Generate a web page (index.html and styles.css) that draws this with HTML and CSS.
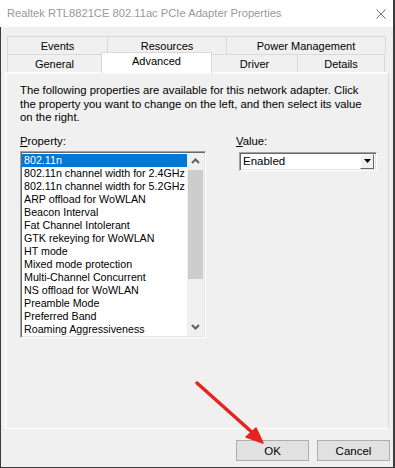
FILE: index.html
```html
<!DOCTYPE html>
<html>
<head>
<meta charset="utf-8">
<link rel="stylesheet" href="styles.css">
</head>
<body>
<div class="window">
  <div class="titlebar">
    <span class="title">Realtek RTL8821CE 802.11ac PCIe Adapter Properties</span>
    <svg class="close" width="10" height="10" viewBox="0 0 10 10"><path d="M0.5 0.5L9.5 9.5M9.5 0.5L0.5 9.5" stroke="#707070" stroke-width="1" fill="none"/></svg>
  </div>
  <div class="body">
    <div class="tabs">
      <div class="tabrow">
        <div class="tab w-events">Events</div>
        <div class="tab w-resources">Resources</div>
        <div class="tab w-power last">Power Management</div>
      </div>
      <div class="tabrow">
        <div class="tab w-general">General</div>
        <div class="tab w-advanced selected">Advanced</div>
        <div class="tab w-driver">Driver</div>
        <div class="tab w-details last">Details</div>
      </div>
    </div>
    <div class="panel">
      <p class="intro">The following properties are available for this network adapter. Click<br>the property you want to change on the left, and then select its value<br>on the right.</p>
      <div class="columns">
        <div class="col-prop">
          <div class="label"><u>P</u>roperty:</div>
          <div class="listbox">
            <ul class="items">
              <li class="sel">802.11n</li>
              <li>802.11n channel width for 2.4GHz</li>
              <li>802.11n channel width for 5.2GHz</li>
              <li>ARP offload for WoWLAN</li>
              <li>Beacon Interval</li>
              <li>Fat Channel Intolerant</li>
              <li>GTK rekeying for WoWLAN</li>
              <li>HT mode</li>
              <li>Mixed mode protection</li>
              <li>Multi-Channel Concurrent</li>
              <li>NS offload for WoWLAN</li>
              <li>Preamble Mode</li>
              <li>Preferred Band</li>
              <li>Roaming Aggressiveness</li>
            </ul>
            <div class="scrollbar">
              <div class="arrow">
                <svg width="9" height="6" viewBox="0 0 9 6"><path d="M1 5L4.5 1.5L8 5" stroke="#606060" stroke-width="2" fill="none"/></svg>
              </div>
              <div class="thumb"></div>
              <div class="track"></div>
              <div class="arrow">
                <svg width="9" height="6" viewBox="0 0 9 6"><path d="M1 1L4.5 4.5L8 1" stroke="#606060" stroke-width="2" fill="none"/></svg>
              </div>
            </div>
          </div>
        </div>
        <div class="col-value">
          <div class="label"><u>V</u>alue:</div>
          <div class="combo">
            <span class="combo-text">Enabled</span>
            <span class="combo-btn">
              <svg width="7" height="4" viewBox="0 0 7 4"><path d="M0 0H7L3.5 4Z" fill="#000"/></svg>
            </span>
          </div>
        </div>
      </div>
    </div>
    <div class="buttons">
      <button class="btn">OK</button>
      <button class="btn">Cancel</button>
    </div>
  </div>
  <svg class="annot" width="395" height="468" viewBox="0 0 395 468">
    <line x1="197" y1="383" x2="254" y2="434" stroke="#e8231f" stroke-width="3.5" stroke-linecap="round"/>
    <path d="M263 443L246 437L256 428Z" fill="#e8231f" stroke="#e8231f" stroke-width="1.5" stroke-linejoin="round"/>
  </svg>
</div>
</body>
</html>
```
FILE: styles.css
```css
* { box-sizing: border-box; }
html, body { margin: 0; padding: 0; background: #fff; }
body {
  font-family: "Liberation Sans", Arial, sans-serif;
  font-size: 11.3px;
  color: #000;
}
.window {
  position: relative;
  width: 395px;
  height: 468px;
  display: flex;
  flex-direction: column;
  border-right: 2px solid #3c3c3c;
  border-bottom: 1px solid #3c3c3c;
  overflow: hidden;
}
.titlebar {
  height: 27px;
  flex: none;
  background: #fff;
  display: flex;
  align-items: center;
  justify-content: space-between;
  padding: 0 7px 1px 7px;
}
.title { color: #999; font-size: 11.2px; }
.close { margin-top: 1px; }
.body {
  flex: 1;
  background: #f0f0f0;
  border-left: 1px solid #3c3c3c;
  padding: 9px 3px 0 4px;
  display: flex;
  flex-direction: column;
}
.tabs { padding-left: 2px; }
.tabrow { display: flex; height: 18px; }
.tab {
  height: 18px;
  border-top: 1px solid #d9d9d9;
  border-left: 1px solid #d9d9d9;
  background: #f0f0f0;
  text-align: center;
  line-height: 18px;
  font-size: 11px;
}
.tab.last { border-right: 1px solid #d9d9d9; }
.w-events { width: 100px; }
.w-resources { width: 119px; }
.w-power { width: 160px; }
.w-general { width: 94px; }
.w-advanced { width: 111px; }
.w-driver { width: 86px; }
.w-details { width: 88px; }
.tab.selected {
  background: #fff;
  height: 21px;
  margin-top: -2px;
  line-height: 17px;
  border-right: 1px solid #d9d9d9;
  margin-right: -1px;
  position: relative;
  z-index: 2;
}
.tab.selected + .tab { border-left: none; padding-left: 1px; }
.panel {
  height: 357px;
  width: 384px;
  border: 1px solid #fff;
  border-right-color: #d9d9d9;
  background: #f0f0f0;
  box-shadow: inset 1px 1px 0 #f7f7f7;
  padding: 11px 14px 0 14px;
}
.intro {
  margin: 0;
  line-height: 13.5px;
  white-space: nowrap;
}
.columns { display: flex; margin-top: 9px; }
.col-prop { width: 186px; }
.col-value { margin-left: 30px; }
.label { line-height: 14px; height: 14px; }
.listbox {
  margin-top: 3px;
  width: 186px;
  height: 187px;
  border: 1px solid;
  border-color: #a0a0a0 #fff #fff #a0a0a0;
  box-shadow: inset 1px 1px 0 #696969, inset -1px -1px 0 #e3e3e3;
  background: #fff;
  padding: 1px;
  display: flex;
}
.items {
  list-style: none;
  margin: 0;
  padding: 1px 0 0 0;
  flex: 1;
  overflow: hidden;
  font-size: 10.7px;
}
.items li {
  height: 13px;
  line-height: 13px;
  padding-left: 2px;
  white-space: nowrap;
}
.items li.sel { background: #0078d7; color: #fff; }
.scrollbar {
  width: 17px;
  flex: none;
  background: #f0f0f0;
  display: flex;
  flex-direction: column;
}
.arrow {
  height: 17px;
  display: flex;
  align-items: center;
  justify-content: center;
}
.thumb { height: 109px; background: #cdcdcd; margin: 0 1px; }
.track { flex: 1; }
.combo {
  margin-top: 4px;
  margin-left: 3px;
  width: 138px;
  height: 19px;
  border: 1px solid;
  border-color: #a0a0a0 #fff #fff #a0a0a0;
  box-shadow: inset 1px 1px 0 #696969, inset -1px -1px 0 #e3e3e3;
  background: #fff;
  display: flex;
  align-items: center;
  justify-content: space-between;
  padding: 1px 2px 1px 3px;
}
.combo-text { line-height: 15px; font-size: 11.5px; }
.combo-btn {
  width: 14px;
  height: 15px;
  background: #f0f0f0;
  border: 1px solid;
  border-color: #fff #696969 #696969 #fff;
  display: flex;
  align-items: center;
  justify-content: center;
}
.buttons {
  display: flex;
  justify-content: flex-end;
  gap: 8px;
  margin-top: 11px;
  padding-right: 0;
}
.btn {
  width: 73px;
  height: 21px;
  background: #e1e1e1;
  border: 1px solid #adadad;
  font-family: "Liberation Sans", Arial, sans-serif;
  font-size: 11.5px;
  color: #000;
  padding: 0;
}
.annot { position: absolute; left: 0; top: 0; pointer-events: none; }
```
